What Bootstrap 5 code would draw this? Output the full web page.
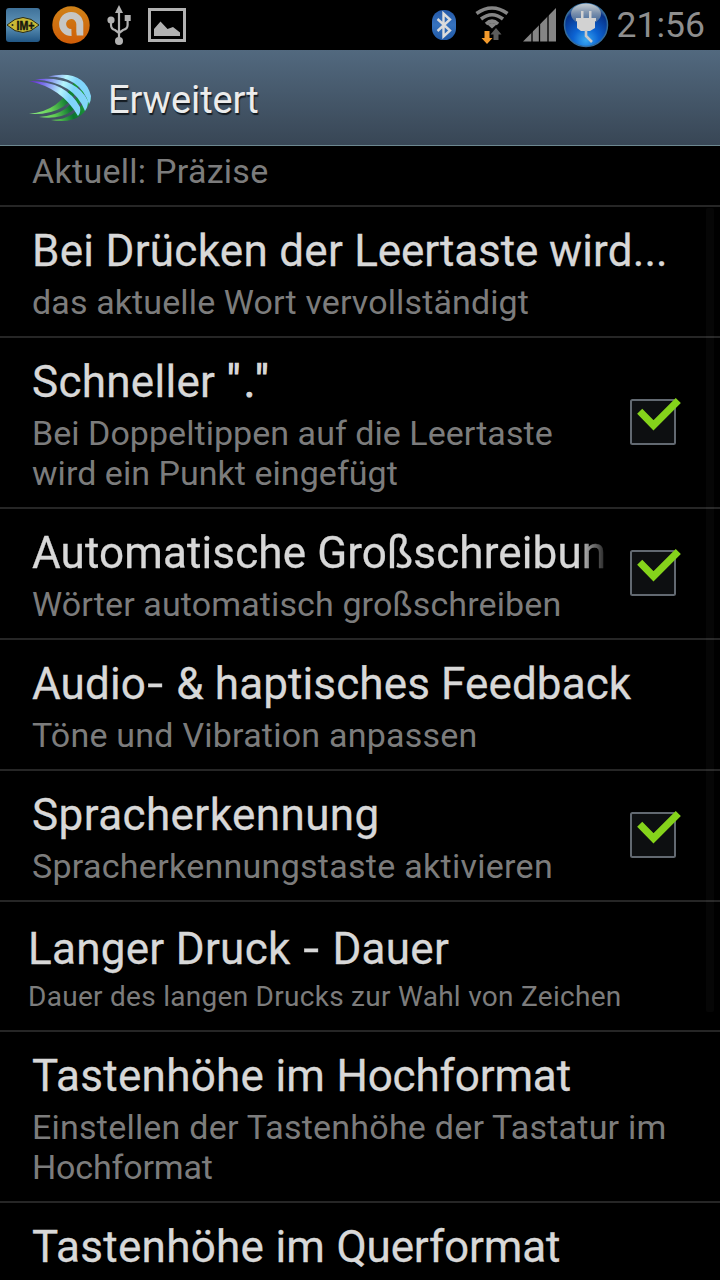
<!DOCTYPE html>
<html lang="de">
<head>
<meta charset="utf-8">
<meta name="viewport" content="width=device-width, initial-scale=1">
<title>Erweitert</title>
<link href="https://cdn.jsdelivr.net/npm/bootstrap@5.3.0/dist/css/bootstrap.min.css" rel="stylesheet">
<style>
html,body{height:1280px;overflow:hidden}
body{background:#000;font-family:Roboto,"Noto Sans",sans-serif;color:#d8d8d8}
.status{height:50px}
.status svg{flex:none;display:block}
.clock{font-size:35.5px;line-height:50px;color:#8e8e8e;margin:0 15px 0 8px}
.title-bar{height:96px;padding-left:28px;background:linear-gradient(#52697f,#384655);border-bottom:1px solid #6d8890}
.title-bar h1{font-size:38px;line-height:46px;margin:4px 0 0 14px;letter-spacing:-.1px;color:#ececec;text-shadow:1px 2px 1px #141b22;font-weight:400}
.list-group-flush>.pref{background:transparent;border:0 solid #262626;border-bottom-width:2px;border-radius:0;padding:18px 32px 14px;color:#d8d8d8}
.pref h2{font-size:44px;line-height:52px;margin:0 0 5px;font-weight:400;white-space:nowrap;letter-spacing:.12px;-webkit-text-stroke:.3px}
.pref p{font-size:34px;line-height:40px;margin:0;color:#7c7c7c;white-space:nowrap;letter-spacing:.12px}
.list-group-flush>.pref-cut{padding-top:5px}
.list-group-flush>.pref-check{padding-right:36px}
.pref-check svg{flex:none;margin-bottom:7px}
.pref-text{width:573px;overflow:hidden}
.list-group-flush>.pref-slim{padding:21px 28px 17px}
.pref-slim p{font-size:28px;line-height:33px}
.pref .ls-0{letter-spacing:.04px}
.pref .ls-2{letter-spacing:.22px}
.pref .ls-3{letter-spacing:.28px}
.pref .ls-4{letter-spacing:.42px}
.pref .ls-n{letter-spacing:-.15px}
.pref .quoted{letter-spacing:3.2px;-webkit-text-stroke:1px}
.dash{display:inline-block;transform:scaleX(1.3);margin:0 4px 0 3px}
.fade-end{-webkit-mask-image:linear-gradient(90deg,#000 545px,transparent 579px);mask-image:linear-gradient(90deg,#000 545px,transparent 579px)}
.thumb{position:absolute;right:6px;top:62px;width:8px;height:804px;background:rgba(255,255,255,.024);border-radius:2px}
</style>
</head>
<body>
<svg width="0" height="0" class="position-absolute" aria-hidden="true">
  <symbol id="check" viewBox="0 0 54 50">
    <rect x="1" y="4" width="44" height="44" rx="1.5" fill="#0d0f11" stroke="#626971" stroke-width="2"/>
    <path d="M9.700 15.300 23.500 29.300 48.300 4.500" fill="none" stroke="#85d31b" stroke-width="7.200"/>
  </symbol>
</svg>

<header class="status d-flex align-items-center">
  <svg width="36" height="36" viewBox="0 0 36 36" style="margin-left:5px">
    <defs><linearGradient id="im" x2="0" y2="1"><stop stop-color="#3f7199"/><stop offset=".5" stop-color="#5f94b8"/><stop offset="1" stop-color="#215684"/></linearGradient></defs>
    <rect x="1" y="1" width="34" height="34" rx="3" fill="url(#im)"/>
    <path d="M2 18Q18 3 34 18 18 33 2 18Z" fill="#c9b936" stroke="#262a1c" stroke-width="1"/>
    <text x="20.500" y="22.500" text-anchor="middle" font-family="Liberation Sans" font-weight="700" font-size="12.500" fill="#15150d" textLength="18" lengthAdjust="spacingAndGlyphs" stroke="#15150d" stroke-width=".5">IM+</text>
    <circle cx="7.500" cy="18" r="1" fill="#222"/>
  </svg>
  <svg width="40" height="40" viewBox="0 0 40 40" style="margin-left:10px">
    <defs><linearGradient id="av" x2="0" y2="1"><stop stop-color="#cf8218"/><stop offset="1" stop-color="#cf5d08"/></linearGradient></defs>
    <circle cx="20" cy="20" r="18.700" fill="url(#av)"/>
    <path d="M20.500 27.600A8.600 8.600 0 1 1 28.800 19V30.500" fill="none" stroke="#c6c6c4" stroke-width="7"/>
    <path d="M23.500 22 25 31" stroke="#cf6b0c" stroke-width="1.500"/>
  </svg>
  <svg width="26" height="40" viewBox="0 0 26 40" style="margin-left:16px" fill="#b2b2b2">
    <path d="M12 0 16 8H8Z"/><circle cx="12" cy="36" r="4"/><circle cx="4" cy="15" r="3.600"/><rect x="17.700" y="10" width="6" height="6"/>
    <path d="M12 5V34M4 15V20Q4 24 8 25L12 28M20.600 13V20Q20.600 24 16 25L12 28" fill="none" stroke="#b2b2b2" stroke-width="2.200"/>
  </svg>
  <svg width="38" height="34" viewBox="0 0 38 34" style="margin-left:15px">
    <rect x="1.500" y="1.500" width="35" height="31" fill="none" stroke="#b2b2b2" stroke-width="3"/>
    <path d="M6 28V21L12.500 13.500 19.500 21 25 19 32 24.500V28Z" fill="#b2b2b2"/>
  </svg>

  <svg width="26" height="32" viewBox="0 0 26 32" class="ms-auto">
    <defs><linearGradient id="bt" x2="0" y2="1"><stop stop-color="#2459a8"/><stop offset=".5" stop-color="#3672bd"/><stop offset="1" stop-color="#1f58a7"/></linearGradient></defs>
    <rect x="1" y="1" width="24" height="30" rx="11.500" fill="url(#bt)"/>
    <path d="M6.500 10 19 21.500 12.500 27.500V4.500L19 10.500 6.500 22" fill="none" stroke="#dcdcdc" stroke-width="2.400"/>
  </svg>
  <svg width="36" height="38" viewBox="0 0 36 38" style="margin-left:18px">
    <g fill="none" stroke="#858585" stroke-width="3.600"><path d="M1.500 7.500Q17-3.500 32.500 7.500M6 13Q17 4.500 28 13M11 18Q17 12.500 23 18"/></g>
    <path d="M12.500 18.500Q17 15.500 21.500 18.500L17 22.500Z" fill="#858585"/>
    <path d="M9.500 25H14.500V32H17.500L12 38 6.500 32H9.500Z" fill="#f39a2c"/><path d="M18.500 34V28.500H15.500L21 22 26.500 28.500H23.500V34Z" fill="#5c5c5c"/>
  </svg>
  <svg width="34" height="34" viewBox="0 0 34 34" style="margin-left:12px">
    <path d="M0 33.500 33 0V33.500Z" fill="#858585"/>
    <path d="M9 20V34M16.500 12V34M25 5V34" stroke="#000" stroke-width="1.300"/>
  </svg>
  <svg width="46" height="46" viewBox="0 0 46 46" style="margin-left:6px">
    <defs><radialGradient id="pw" cy=".85" r=".85"><stop stop-color="#39a8f0"/><stop offset=".35" stop-color="#0c63d2"/><stop offset=".8" stop-color="#063188"/><stop offset="1" stop-color="#7894af"/></radialGradient>
    <linearGradient id="gl" x2="0" y2="1"><stop stop-color="#c4ccd2"/><stop offset="1" stop-color="#55718f" stop-opacity=".65"/></linearGradient></defs>
    <circle cx="23" cy="23" r="21.500" fill="url(#pw)" stroke="#346c9c" stroke-width="1.500"/>
    <ellipse cx="23" cy="12" rx="15" ry="10.500" fill="url(#gl)"/>
    <path d="M18 9H20.500V16H26V9H28.500V16H33V19H32V26L27 29H18L14 26V19H13V16H18Z" fill="#d2d2d2"/>
    <path d="M23 28V34L29 40" fill="none" stroke="#c9c9c9" stroke-width="2.600"/>
  </svg>
  <span class="clock">21:56</span>
</header>

<div class="title-bar d-flex align-items-center">
  <svg width="66" height="50" viewBox="0 0 66 50">
    <defs>
      <linearGradient id="blue" gradientUnits="userSpaceOnUse" x1="2" y1="10" x2="62" y2="35"><stop stop-color="#6b22dd"/><stop offset=".2" stop-color="#7b72ec"/><stop offset=".48" stop-color="#b5f4fc"/><stop offset=".65" stop-color="#80d4fb"/><stop offset="1" stop-color="#83d6f8"/></linearGradient>
      <linearGradient id="green" gradientUnits="userSpaceOnUse" x1="2" y1="40" x2="60" y2="20"><stop stop-color="#8df083"/><stop offset=".35" stop-color="#65cf55"/><stop offset=".65" stop-color="#0b7330"/><stop offset="1" stop-color="#25a63c"/></linearGradient>
    </defs>
    <g fill="url(#green)">
      <path d="M1 41Q32 38 46 9L51 12Q41 43 1 41Z"/>
      <path d="M11 44Q43 42 54 14L58 18Q47 49 11 44Z"/>
      <path d="M23 47Q49 47 59 22L63 25Q56 53 23 47Z"/>
    </g>
    <g fill="url(#blue)">
      <path d="M1 8Q34 15 50 43Q53 40 52 34Q38 8 1 8Z"/>
      <path d="M7 6.500Q46 9 57 38Q60 34 60 28Q47 2 7 6.500Z"/>
      <path d="M20 3.500Q52 3 61 31Q63 28 63 23Q56-4 20 3.500Z"/>
    </g>
  </svg>
  <h1>Erweitert</h1>
</div>

<main class="position-relative">
  <div class="list-group list-group-flush">
    <div class="list-group-item pref pref-cut"><p class="ls-3">Aktuell: Präzise</p></div>
    <div class="list-group-item pref">
      <h2><span class="ls-3">Bei Drücken der </span><span class="ls-n">Leertaste</span> wird...</h2>
      <p>das aktuelle Wort vervollständigt</p>
    </div>
    <div class="list-group-item pref pref-check d-flex align-items-center justify-content-between">
      <div class="pref-text"><h2 class="ls-3">Schneller <span class="quoted">"."</span></h2><p class="ls-0">Bei Doppeltippen auf die Leertaste<br>wird ein Punkt eingefügt</p></div>
      <svg width="54" height="50"><use href="#check"/></svg>
    </div>
    <div class="list-group-item pref pref-check d-flex align-items-center justify-content-between">
      <div class="pref-text"><h2 class="fade-end">Automatische Großschreibun</h2><p>Wörter automatisch großschreiben</p></div>
      <svg width="54" height="50"><use href="#check"/></svg>
    </div>
    <div class="list-group-item pref">
      <h2>Audio<span class="dash">-</span> &amp; haptisches Feedback</h2>
      <p class="ls-2">Töne und Vibration anpassen</p>
    </div>
    <div class="list-group-item pref pref-check d-flex align-items-center justify-content-between">
      <div class="pref-text"><h2 class="ls-4">Spracherkennung</h2><p class="ls-3">Spracherkennungstaste aktivieren</p></div>
      <svg width="54" height="50"><use href="#check"/></svg>
    </div>
    <div class="list-group-item pref pref-slim">
      <h2 class="ls-3">Langer Druck <span class="dash">-</span> Dauer</h2>
      <p class="ls-3">Dauer des langen Drucks zur Wahl von Zeichen</p>
    </div>
    <div class="list-group-item pref">
      <h2 class="ls-n"><span class="ls-3">Tastenhöhe im </span>Hochformat</h2>
      <p class="ls-2">Einstellen der Tastenhöhe der Tastatur im<br><span class="ls-n">Hochformat</span></p>
    </div>
    <div class="list-group-item pref"><h2 class="ls-n"><span class="ls-3">Tastenhöhe im </span>Querformat</h2></div>
  </div>
  <div class="thumb"></div>
</main>
<script src="https://cdn.jsdelivr.net/npm/bootstrap@5.3.0/dist/js/bootstrap.bundle.min.js"></script>
</body>
</html>
